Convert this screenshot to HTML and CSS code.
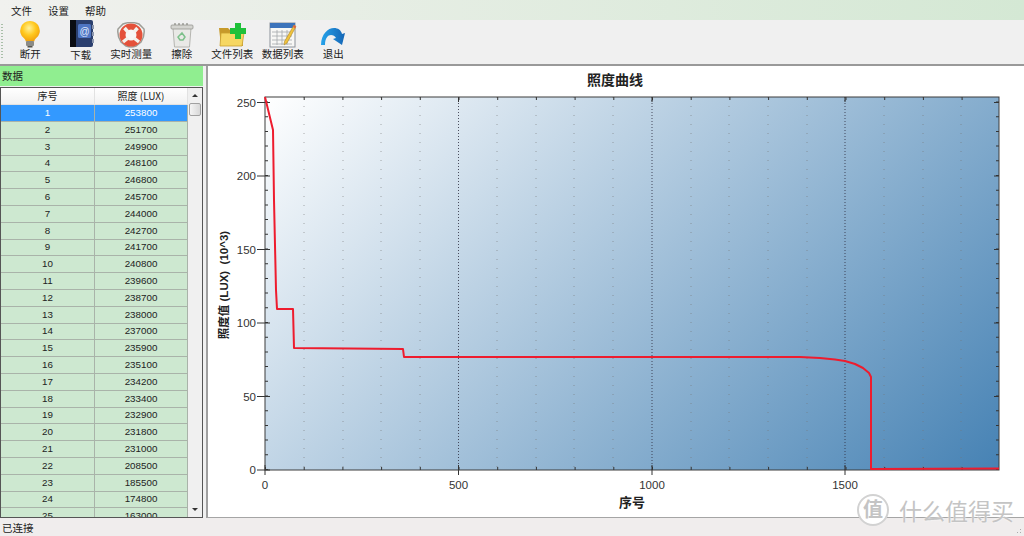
FILE: index.html
```html
<!DOCTYPE html>
<html lang="zh">
<head>
  <meta charset="UTF-8">
  <title>照度曲线</title>
  <link rel="stylesheet" href="styles.css">
</head>
<body>
  <div class="menubar">
    <span>文件</span>
    <span>设置</span>
    <span>帮助</span>
  </div>

  <div class="toolbar">
    <div class="gripper"></div>
    <div class="tool">
      <svg width="26" height="28" viewBox="0 0 26 28">
        <defs>
          <radialGradient id="bulb" cx="0.45" cy="0.35" r="0.7">
            <stop offset="0" stop-color="#fff29a"/>
            <stop offset="0.5" stop-color="#ffc81e"/>
            <stop offset="1" stop-color="#f09a08"/>
          </radialGradient>
        </defs>
        <path d="M13 1a9.700 9.700 0 0 0-6 17.300q1.600 1.500 1.800 3.200h8.400q.2-1.700 1.800-3.200A9.700 9.700 0 0 0 13 1z" fill="url(#bulb)"/>
        <rect x="9" y="21" width="8" height="5" rx="1" fill="#8b8b86"/>
        <rect x="10.500" y="26" width="5" height="1.500" fill="#55544f"/>
      </svg>
      <span>断开</span>
    </div>
    <div class="tool tool-low">
      <svg width="26" height="28" viewBox="0 0 26 28">
        <rect x="2" y="0" width="23" height="27" rx="2" fill="#2b3f6e"/>
        <rect x="2" y="0" width="6" height="27" fill="#0a0c12"/>
        <rect x="10" y="4" width="13" height="14" rx="1.500" fill="#4f76c4"/>
        <text x="16.500" y="15" class="icon-at">@</text>
        <path d="M25 5v4M25 12v4M25 19v4" stroke="#8d97ad" stroke-width="2"/>
      </svg>
      <span>下载</span>
    </div>
    <div class="tool">
      <svg width="28" height="26" viewBox="0 0 28 26">
        <path d="M6 2q8-3 16 0l5 5q1 7-3 13l-5 4q-5 2-10 0l-5-4Q0 14 1 7z" fill="#f4f4f2" stroke="#9c9c96" stroke-width="1.500"/>
        <circle cx="14" cy="13" r="8.500" fill="#f7f7f5" stroke="#e4513a" stroke-width="6"/>
        <path d="M7.500 6l3.500 4M20.500 6l-3.500 4M6 20l5-4M22 20l-5-4" stroke="#f3f1ec" stroke-width="3.500"/>
      </svg>
      <span>实时测量</span>
    </div>
    <div class="tool">
      <svg width="24" height="26" viewBox="0 0 24 26">
        <path d="M3 6h18l-1.500 19h-15z" fill="#e9e9e6" stroke="#b5b5b0"/>
        <rect x="1" y="3" width="22" height="4" rx="1" fill="#d4d4d0" stroke="#8e8e88" stroke-width="0.700"/>
        <path d="M5 3v-2M9 3v-2M13 3v-2M17 3v-2" stroke="#77776f"/>
        <path d="M12 11l3 4-2 3h-3l-2-3z" fill="none" stroke="#7cc08a" stroke-width="1.500"/>
      </svg>
      <span>擦除</span>
    </div>
    <div class="tool">
      <svg width="28" height="26" viewBox="0 0 28 26">
        <path d="M1 6h9l2 2h11l2 16H3z" fill="#c79a2a"/>
        <path d="M3 11h23l-2 13H2z" fill="#f6d762" stroke="#c99f2e" stroke-width="0.800"/>
        <path d="M17 1h6v5h5v6h-5v5h-6v-5h-5V6h5z" fill="#1fc13a"/>
      </svg>
      <span>文件列表</span>
    </div>
    <div class="tool">
      <svg width="28" height="26" viewBox="0 0 28 26">
        <rect x="1" y="1" width="25" height="24" fill="#f7f7f5" stroke="#8c929a"/>
        <rect x="1" y="1" width="25" height="5" fill="#3d73bb"/>
        <path d="M3 10h20M3 14h20M3 18h20M3 22h20M8 8v15M13 8v15M18 8v15" stroke="#a3a7aa" stroke-width="0.800"/>
        <path d="M25 3l2 1.500L18 21l-3 2 .5-3.500z" fill="#f0c33c" stroke="#a9842a" stroke-width="0.600"/>
        <path d="M25 3l2 1.500-1 2-2-1.500z" fill="#e0604a"/>
      </svg>
      <span>数据列表</span>
    </div>
    <div class="tool tool-exit">
      <svg width="26" height="20" viewBox="0 0 26 20">
        <defs>
          <linearGradient id="arrow" x1="0" y1="0" x2="1" y2="0">
            <stop offset="0" stop-color="#25a3ea"/>
            <stop offset="1" stop-color="#1565b5"/>
          </linearGradient>
        </defs>
        <path d="M1 18C1 7 8 1 14 1c4 0 7 2 8 6l3-1-3 12-9-6 3-1c-1-2-3-3-5-3-3 0-6 3-6 10z" fill="url(#arrow)"/>
      </svg>
      <span>退出</span>
    </div>
  </div>

  <div class="main">
    <div class="data-panel">
      <div class="panel-title">数据</div>
      <div class="grid-box">
        <div class="grid">
          <div class="row head"><div>序号</div><div>照度 (LUX)</div></div>
          <div class="row selected"><div>1</div><div>253800</div></div>
          <div class="row"><div>2</div><div>251700</div></div>
          <div class="row"><div>3</div><div>249900</div></div>
          <div class="row"><div>4</div><div>248100</div></div>
          <div class="row"><div>5</div><div>246800</div></div>
          <div class="row"><div>6</div><div>245700</div></div>
          <div class="row"><div>7</div><div>244000</div></div>
          <div class="row"><div>8</div><div>242700</div></div>
          <div class="row"><div>9</div><div>241700</div></div>
          <div class="row"><div>10</div><div>240800</div></div>
          <div class="row"><div>11</div><div>239600</div></div>
          <div class="row"><div>12</div><div>238700</div></div>
          <div class="row"><div>13</div><div>238000</div></div>
          <div class="row"><div>14</div><div>237000</div></div>
          <div class="row"><div>15</div><div>235900</div></div>
          <div class="row"><div>16</div><div>235100</div></div>
          <div class="row"><div>17</div><div>234200</div></div>
          <div class="row"><div>18</div><div>233400</div></div>
          <div class="row"><div>19</div><div>232900</div></div>
          <div class="row"><div>20</div><div>231800</div></div>
          <div class="row"><div>21</div><div>231000</div></div>
          <div class="row"><div>22</div><div>208500</div></div>
          <div class="row"><div>23</div><div>185500</div></div>
          <div class="row"><div>24</div><div>174800</div></div>
          <div class="row"><div>25</div><div>163000</div></div>
        </div>
        <div class="scrollbar">
          <div class="arrow-up"></div>
          <div class="thumb"></div>
          <div class="track"></div>
          <div class="arrow-down"></div>
        </div>
      </div>
    </div>

    <div class="chart-panel">
      <svg class="chart" viewBox="208 66 814 452" width="814" height="452">
        <defs>
          <linearGradient id="plot-bg" gradientUnits="userSpaceOnUse" x1="265" y1="97" x2="818.500" y2="650.500">
            <stop offset="0" stop-color="#ffffff"/>
            <stop offset="1" stop-color="#4682b4"/>
          </linearGradient>
        </defs>

        <text x="615" y="85" class="chart-title">照度曲线</text>

        <rect x="265" y="97" width="734" height="373" fill="url(#plot-bg)"/>

        <!-- grid, x axis only -->
        <path class="grid-minor" d="M304 97V470M343 97V470M381 97V470M420 97V470M497 97V470M536 97V470M574 97V470M613 97V470M691 97V470M729 97V470M768 97V470M807 97V470M884 97V470M923 97V470M961 97V470"/>
        <path class="grid-major" d="M458.500 97V470M652 97V470M845 97V470"/>

        <!-- minor ticks as dashes along each edge -->
        <line class="tick" x1="266.500" y1="470" x2="266.500" y2="97" stroke-dasharray="1 13.700"/>
        <line class="tick" x1="997.500" y1="470" x2="997.500" y2="97" stroke-dasharray="1 13.700"/>
        <line class="tick" x1="265" y1="468.500" x2="999" y2="468.500" stroke-dasharray="1 37.700"/>
        <line class="tick" x1="265" y1="98.500" x2="999" y2="98.500" stroke-dasharray="1 37.700"/>

        <!-- major ticks -->
        <path class="tick-major" d="M257 470H270M257 396.500H270M257 323H270M257 249.500H270M257 176H270M257 102.500H270"/>
        <path class="tick-major" d="M994 396.500H999M994 323H999M994 249.500H999M994 176H999M994 102.500H999"/>
        <path class="tick-major" d="M265 465V475M458.500 465V475M652 465V475M845 465V475"/>
        <path class="tick-major" d="M458.500 97V102M652 97V102M845 97V102"/>

        <rect class="plot-frame" x="265" y="97" width="734" height="373"/>

        <polyline class="curve" points="265,97 273,130 274,200 276,290 277,309 293,309 294,348 350,348.500 403,349 404,357 600,357 800,357 820,358 835,359.500 845,361 855,364 863,368 869,373 871,377 871,469 999,468.500"/>

        <g class="y-labels">
          <text x="256" y="474">0</text>
          <text x="256" y="401">50</text>
          <text x="256" y="327">100</text>
          <text x="256" y="254">150</text>
          <text x="256" y="180">200</text>
          <text x="256" y="107">250</text>
        </g>
        <g class="x-labels">
          <text x="265" y="489">0</text>
          <text x="458.500" y="489">500</text>
          <text x="652" y="489">1000</text>
          <text x="845" y="489">1500</text>
        </g>

        <text x="632" y="507" class="axis-title axis-title-x">序号</text>
        <text transform="translate(228 285) rotate(-90)" class="axis-title">照度值 (LUX)  (10^3)</text>
      </svg>
    </div>
  </div>

  <div class="statusbar">
    <span>已连接</span>
    <div class="grip"></div>
  </div>

  <div class="watermark">
    <div class="wm-badge">值</div>
    <div class="wm-text">什么值得买</div>
  </div>
</body>
</html>
```

FILE: styles.css
```css
* {
  box-sizing: border-box;
}
html, body {
  margin: 0;
  height: 100%;
}
body {
  position: relative;
  display: flex;
  flex-direction: column;
  width: 1024px;
  height: 536px;
  overflow: hidden;
  background: #f0f0f0;
  font-family: "Noto Sans CJK SC", "Liberation Sans", sans-serif;
  font-size: 10.5px;
  color: #222;
}

.menubar {
  display: flex;
  gap: 16px;
  align-items: center;
  height: 20px;
  padding-left: 11px;
  background: linear-gradient(to right, #f1f1ee, #d4e8d4);
}

.toolbar {
  display: flex;
  height: 46px;
  padding-left: 5px;
  border-bottom: 2px solid #999;
  background: #f0f0f0;
}
.gripper {
  position: absolute;
  left: 1px;
  top: 24px;
  width: 2px;
  height: 36px;
  background: repeating-linear-gradient(to bottom, #a9bfa9 0 1px, transparent 1px 3px);
}
.tool {
  display: flex;
  flex-direction: column;
  align-items: center;
  justify-content: flex-end;
  width: 50.5px;
  padding-bottom: 4px;
  white-space: nowrap;
  line-height: 13px;
}
.tool svg {
  margin-bottom: -1px;
}
.tool-low {
  padding-bottom: 3px;
}
.tool-low svg {
  margin-bottom: 0;
}
.tool-exit svg {
  margin-bottom: 0;
}
.icon-at {
  font-family: "Liberation Sans", sans-serif;
  font-size: 10px;
  fill: #dfe8fb;
  text-anchor: middle;
}

.main {
  display: flex;
  flex: 1;
  min-height: 0;
}

.data-panel {
  display: flex;
  flex-direction: column;
  width: 203px;
}
.panel-title {
  height: 20px;
  margin-bottom: 1px;
  padding-left: 2px;
  line-height: 19px;
  background: #90ee90;
}
.grid-box {
  display: flex;
  height: 431px;
  border: 1px solid #555;
  background: #f0f0f0;
}
.grid {
  width: 187px;
  overflow: hidden;
}
.row {
  display: grid;
  grid-template-columns: 94px 93px;
  height: 16.8px;
  background: #cde8d0;
  font-family: "Liberation Sans", "Noto Sans CJK SC", sans-serif;
  font-size: 9.8px;
  text-align: center;
  line-height: 16px;
}
.row div {
  border-right: 1px solid #a9b3a9;
  border-bottom: 1px solid #a9b3a9;
}
.head {
  height: 17px;
  background: linear-gradient(to bottom, #fff, #f1f1f1);
  font-family: "Noto Sans CJK SC", sans-serif;
  font-size: 10px;
}
.head div {
  border-color: #e2e2e2;
}
.selected {
  background: #3399ff;
  color: #fff;
}

.scrollbar {
  display: flex;
  flex-direction: column;
  align-items: center;
  width: 14px;
}
.arrow-up, .arrow-down {
  display: flex;
  align-items: center;
  justify-content: center;
  height: 15px;
}
.arrow-up::before, .arrow-down::before {
  content: "";
  border-left: 3px solid transparent;
  border-right: 3px solid transparent;
}
.arrow-up::before {
  border-bottom: 3px solid #333;
}
.arrow-down::before {
  border-top: 3px solid #333;
}
.thumb {
  width: 12px;
  height: 13px;
  border: 1px solid #a0a0a0;
  border-radius: 2px;
  background: linear-gradient(to right, #f4f4f4, #d8d8d8);
}
.track {
  flex: 1;
}

.chart-panel {
  width: 818px;
  margin-left: 3px;
  border-left: 2px solid #a0a0a0;
  background: #fff;
  border-bottom: 1px solid #a5a5a5;
}
.chart {
  display: block;
  font-family: "Liberation Sans", "Noto Sans CJK SC", sans-serif;
}
.chart-title {
  font-family: "Noto Sans CJK SC", sans-serif;
  font-size: 14px;
  font-weight: 700;
  text-anchor: middle;
  fill: #222;
}
.axis-title {
  font-family: "Liberation Sans", "Noto Sans CJK SC", sans-serif;
  font-size: 11.5px;
  font-weight: 700;
  text-anchor: middle;
  fill: #222;
  white-space: pre;
}
.axis-title-x {
  font-size: 13px;
}
.y-labels text, .x-labels text {
  font-size: 11.5px;
  fill: #333;
}
.y-labels text {
  text-anchor: end;
}
.x-labels text {
  text-anchor: middle;
}
.grid-minor {
  fill: none;
  stroke: #777;
  stroke-opacity: 0.6;
  stroke-dasharray: 1 8;
}
.grid-major {
  fill: none;
  stroke: #334;
  stroke-opacity: 0.85;
  stroke-dasharray: 1 2;
}
.tick {
  stroke: #333;
  stroke-width: 3;
}
.tick-major {
  fill: none;
  stroke: #333;
}
.plot-frame {
  fill: none;
  stroke: #3c3c3c;
}
.curve {
  fill: none;
  stroke: #ee1c2e;
  stroke-width: 2;
  stroke-linejoin: round;
}

.statusbar {
  display: flex;
  align-items: center;
  height: 18px;
  padding-left: 2px;
  background: #f0eded;
}
.grip {
  position: absolute;
  right: 1px;
  bottom: 1px;
  width: 10px;
  height: 10px;
  background: radial-gradient(circle, #aaa 1px, transparent 1px) 0 0 / 3px 3px;
  clip-path: polygon(100% 0, 100% 100%, 0 100%);
}

.watermark {
  position: absolute;
  right: 10px;
  bottom: 10px;
  display: flex;
  align-items: center;
  gap: 10px;
  color: #c4c4c4;
  text-shadow: 0 0 2px #fff;
}
.wm-badge {
  width: 32px;
  height: 32px;
  border: 2px solid #d2d2d2;
  border-radius: 50%;
  background: #fff;
  font-size: 20px;
  font-weight: 700;
  line-height: 26px;
  text-align: center;
}
.wm-text {
  font-size: 23px;
  line-height: 28px;
  white-space: nowrap;
}
```
